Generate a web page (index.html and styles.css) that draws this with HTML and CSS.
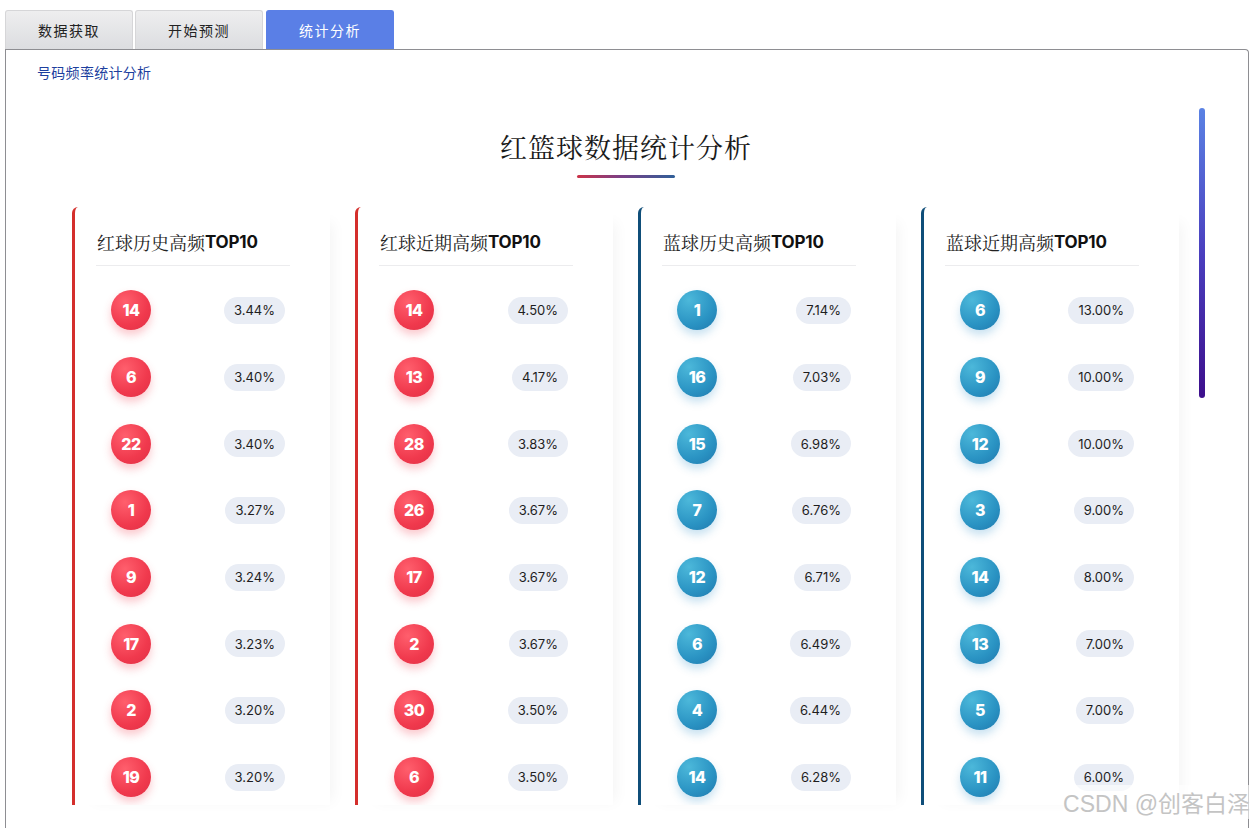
FILE: index.html
```html
<!DOCTYPE html>
<html lang="zh">
<head>
<meta charset="utf-8">
<title>统计分析</title>
<link rel="stylesheet" href="styles.css">
</head>
<body>
<div class="app">
  <div class="tabs">
    <div class="tab">数据获取</div>
    <div class="tab">开始预测</div>
    <div class="tab active">统计分析</div>
  </div>
  <div class="panel">
    <div class="subtitle">号码频率统计分析</div>
    <div class="scroll">
      <div class="content">
        <h1 class="title">红篮球数据统计分析</h1>
        <div class="title-bar"></div>
        <div class="cards">
          <div class="card red">
            <div class="card-head"><span class="cn">红球历史高频</span><span class="en">TOP10</span></div>
            <div class="rows">
              <div class="row"><span class="ball">14</span><span class="pill">3.44%</span></div>
              <div class="row"><span class="ball">6</span><span class="pill">3.40%</span></div>
              <div class="row"><span class="ball">22</span><span class="pill">3.40%</span></div>
              <div class="row"><span class="ball">1</span><span class="pill">3.27%</span></div>
              <div class="row"><span class="ball">9</span><span class="pill">3.24%</span></div>
              <div class="row"><span class="ball">17</span><span class="pill">3.23%</span></div>
              <div class="row"><span class="ball">2</span><span class="pill">3.20%</span></div>
              <div class="row"><span class="ball">19</span><span class="pill">3.20%</span></div>
            </div>
          </div>
          <div class="card red">
            <div class="card-head"><span class="cn">红球近期高频</span><span class="en">TOP10</span></div>
            <div class="rows">
              <div class="row"><span class="ball">14</span><span class="pill">4.50%</span></div>
              <div class="row"><span class="ball">13</span><span class="pill">4.17%</span></div>
              <div class="row"><span class="ball">28</span><span class="pill">3.83%</span></div>
              <div class="row"><span class="ball">26</span><span class="pill">3.67%</span></div>
              <div class="row"><span class="ball">17</span><span class="pill">3.67%</span></div>
              <div class="row"><span class="ball">2</span><span class="pill">3.67%</span></div>
              <div class="row"><span class="ball">30</span><span class="pill">3.50%</span></div>
              <div class="row"><span class="ball">6</span><span class="pill">3.50%</span></div>
            </div>
          </div>
          <div class="card blue">
            <div class="card-head"><span class="cn">蓝球历史高频</span><span class="en">TOP10</span></div>
            <div class="rows">
              <div class="row"><span class="ball">1</span><span class="pill">7.14%</span></div>
              <div class="row"><span class="ball">16</span><span class="pill">7.03%</span></div>
              <div class="row"><span class="ball">15</span><span class="pill">6.98%</span></div>
              <div class="row"><span class="ball">7</span><span class="pill">6.76%</span></div>
              <div class="row"><span class="ball">12</span><span class="pill">6.71%</span></div>
              <div class="row"><span class="ball">6</span><span class="pill">6.49%</span></div>
              <div class="row"><span class="ball">4</span><span class="pill">6.44%</span></div>
              <div class="row"><span class="ball">14</span><span class="pill">6.28%</span></div>
            </div>
          </div>
          <div class="card blue">
            <div class="card-head"><span class="cn">蓝球近期高频</span><span class="en">TOP10</span></div>
            <div class="rows">
              <div class="row"><span class="ball">6</span><span class="pill">13.00%</span></div>
              <div class="row"><span class="ball">9</span><span class="pill">10.00%</span></div>
              <div class="row"><span class="ball">12</span><span class="pill">10.00%</span></div>
              <div class="row"><span class="ball">3</span><span class="pill">9.00%</span></div>
              <div class="row"><span class="ball">14</span><span class="pill">8.00%</span></div>
              <div class="row"><span class="ball">13</span><span class="pill">7.00%</span></div>
              <div class="row"><span class="ball">5</span><span class="pill">7.00%</span></div>
              <div class="row"><span class="ball">11</span><span class="pill">6.00%</span></div>
            </div>
          </div>
        </div>
      </div>
      <div class="thumb"></div>
    </div>
  </div>
  <div class="watermark">CSDN @创客白泽</div>
</div>
</body>
</html>
```

FILE: styles.css
```css
* { box-sizing: border-box; }
html, body {
  margin: 0;
  padding: 0;
  background: #ffffff;
  overflow: hidden;
}
body {
  font-family: "Noto Sans CJK SC", "Noto Sans", sans-serif;
  color: #222;
}
.app {
  position: relative;
  width: 1253px;
  height: 828px;
  padding: 10px 4px 0 5px;
}
.tabs {
  display: flex;
  gap: 2px;
  height: 39px;
}
.tab {
  width: 128px;
  height: 39px;
  display: flex;
  align-items: center;
  justify-content: center;
  font-size: 14px;
  color: #222;
  background: linear-gradient(#eeeeef, #dcdde0);
  border: 1px solid #d6d6d8;
  border-bottom: none;
  border-radius: 3px 3px 0 0;
  letter-spacing: 1.5px;
}
.tab.active {
  margin-left: 1px;
  background: #5a7fe6;
  border-color: #5a7fe6;
  color: #ffffff;
}
.panel {
  height: 790px;
  border: 1px solid #8e8e92;
  border-bottom: none;
  border-radius: 0 4px 0 0;
  background: #ffffff;
  display: flex;
  flex-direction: column;
}
.subtitle {
  padding: 12px 0 0 31px;
  height: 50px;
  font-size: 14px;
  color: #1d3f9e;
  letter-spacing: 0.3px;
}
.scroll {
  position: relative;
  flex: 1;
  overflow: hidden;
}
.content {
  padding: 27px 0 0 66px;
  width: 1174px;
}
.title {
  margin: 0;
  text-align: center;
  font-family: "Noto Serif CJK SC", "Source Han Serif SC", "AR PL UMing CN", serif;
  font-weight: 400;
  font-size: 27px;
  line-height: 40px;
  color: #1a1a1a;
  letter-spacing: 1px;
}
.title-bar {
  width: 98px;
  height: 3px;
  margin: 8px auto 0;
  border-radius: 2px;
  background: linear-gradient(90deg, #cc3348, #7a3f86 45%, #2f5f98);
}
.cards {
  margin-top: 29px;
  display: grid;
  grid-template-columns: repeat(4, 258px);
  column-gap: 25px;
}
.card {
  height: 598px;
  overflow: hidden;
  border-left: 3px solid #d42f2c;
  border-radius: 6px 0 0 0;
  background: #ffffff;
  padding: 14px 40px 0 21px;
  box-shadow: 12px 6px 14px -10px rgba(0, 0, 0, 0.05);
}
.card.blue { border-left-color: #0f4e79; }
.card-head {
  height: 45px;
  border-bottom: 1px solid #ececee;
  display: flex;
  align-items: center;
  padding-left: 1px;
  padding-bottom: 2px;
}
.card-head .cn {
  font-family: "Noto Serif CJK SC", "AR PL UMing CN", serif;
  font-size: 18px;
  color: #222;
}
.card-head .en {
  font-family: "Inter", "Lato", sans-serif;
  font-weight: 700;
  font-size: 17px;
  color: #111;
  letter-spacing: -0.2px;
}
.rows {
  padding: 11px 5px 0 15px;
}
.row {
  height: 66.7px;
  display: flex;
  align-items: center;
  justify-content: space-between;
}
.ball {
  width: 40px;
  height: 40px;
  border-radius: 50%;
  display: flex;
  align-items: center;
  justify-content: center;
  font-family: "Inter", "Lato", sans-serif;
  font-weight: 800;
  font-size: 16px;
  color: #ffffff;
  letter-spacing: -0.5px;
}
.red .ball {
  background: radial-gradient(circle at 35% 30%, #ff5f6d, #f0394d 60%, #e02f45);
  box-shadow: 0 5px 8px rgba(240, 60, 80, 0.28);
}
.blue .ball {
  background: radial-gradient(circle at 30% 25%, #4cb8da, #2a93c3 60%, #1f78ad);
  box-shadow: 0 5px 8px rgba(40, 140, 200, 0.25);
}
.pill {
  height: 27px;
  padding: 0 10px;
  border-radius: 14px;
  background: #e9edf5;
  display: flex;
  align-items: center;
  font-family: "Inter", "Lato", sans-serif;
  font-size: 13px;
  color: #1e1e1e;
}
.thumb {
  position: absolute;
  top: 8px;
  left: 1193px;
  width: 6px;
  height: 290px;
  border-radius: 3px;
  background: linear-gradient(#5a82e4, #4a3fbf 50%, #3d0f8c);
}
.watermark {
  position: absolute;
  right: 3px;
  bottom: 9px;
  font-family: "Liberation Sans", "Noto Sans CJK SC", sans-serif;
  font-size: 23px;
  color: #c4c4c4;
  background: rgba(255, 255, 255, 0.6);
}
```
